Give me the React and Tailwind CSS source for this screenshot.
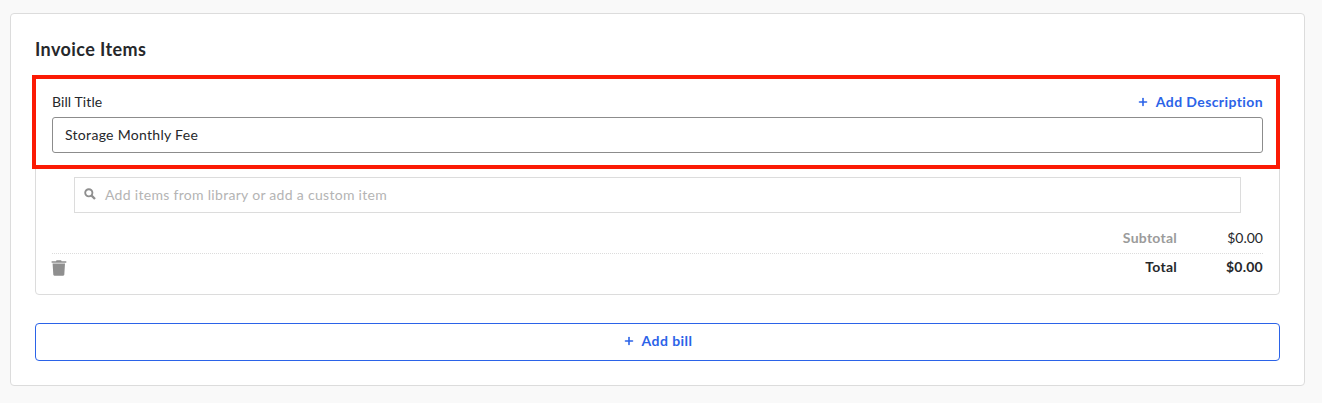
import { Plus } from "lucide-react";

function TrashIcon() {
  return (
    <svg width="16" height="17" viewBox="0 0 16 17" fill="#8f8f8f" className="-ml-px mt-[2px]">
      <path d="M5.5 1.2h4.6l.5 1h4.7v1.5H.6V2.2h4.4z" />
      <path d="M1.6 4.6h12.4l-.7 11c0 .7-.5 1.1-1.1 1.1H3.4c-.6 0-1.1-.4-1.1-1.1z" />
    </svg>
  );
}

function SearchIcon() {
  return (
    <svg width="12" height="12" viewBox="0 0 12 12" fill="none" stroke="#8f8f8f" className="mr-[9px]">
      <circle cx="4.8" cy="4.8" r="3.6" strokeWidth="1.9" />
      <path d="M7.6 7.6l3.4 3.4" strokeWidth="2.3" />
    </svg>
  );
}

export default function App() {
  return (
    <div className="w-[1322px] h-[403px] bg-[#f9f9f9] pt-[13px] pl-[10px] font-['Lato',sans-serif] overflow-hidden">
      <div className="w-[1295px] h-[373px] bg-white border border-[#dcdcdc] rounded-[4px] pt-[25px] px-[24px]">
        <h2 className="text-[18px] leading-[20px] font-bold text-[#26282b] tracking-[0.4px]">Invoice Items</h2>

        <div className="mt-[16px] w-[1245px] h-[220px] border border-[#dcdcdc] rounded-[4px]">
          {/* red highlight around the title field */}
          <div className="-ml-[4px] -mt-px w-[1248px] h-[94px] border-[4px] border-[#fb1a04] pt-[13px] pl-[16px] pr-[13px]">
            <div className="flex items-center justify-between h-[20px]">
              <span className="text-[14px] leading-[20px] text-[#26282b] tracking-[0.1px]">Bill Title</span>
              <button className="flex items-center text-[14px] leading-[20px] font-bold text-[#2b63e8] tracking-[0.4px]">
                <Plus size={12} strokeWidth={3.2} className="mr-[7px]" />
                Add Description
              </button>
            </div>
            <div className="mt-[5px] h-[36px] w-[1211px] border border-[#8c8c8c] rounded-[3px] pl-[12px] pb-[2px] flex items-center text-[14px] text-[#26282b] tracking-[0.3px]">
              Storage Monthly Fee
            </div>
          </div>

          <div className="ml-[38px] mt-[8px] w-[1167px] h-[36px] border border-[#dcdcdc] flex items-center pl-[9px] pb-[2px] text-[14px] text-[#b4b4b4] tracking-[0.3px]">
            <SearchIcon />
            Add items from library or add a custom item
          </div>

          <div className="ml-[16px] mt-[13px] w-[1211px]">
            <div className="h-[28px] pt-[2px] border-b border-dotted border-[#dcdcdc] flex justify-end items-start text-[14px] leading-[20px] tracking-[0.25px]">
              <span className="font-bold text-[#9b9b9b]">Subtotal</span>
              <span className="w-[86px] text-right text-[#26282b] tracking-normal">$0.00</span>
            </div>
            <div className="flex items-start justify-between pt-[3px]">
              <TrashIcon />
              <div className="flex text-[14px] leading-[20px] font-bold text-[#26282b] tracking-[0.25px]">
                <span>Total</span>
                <span className="w-[86px] text-right">$0.00</span>
              </div>
            </div>
          </div>
        </div>

        <button className="mt-[28px] w-[1245px] h-[38px] border border-[#2b63e8] rounded-[4px] pb-[3px] flex items-center justify-center text-[14px] font-bold text-[#2b63e8] tracking-[0.45px]">
          <Plus size={12} strokeWidth={3.2} className="mr-[7px]" />
          Add bill
        </button>
      </div>
    </div>
  );
}
